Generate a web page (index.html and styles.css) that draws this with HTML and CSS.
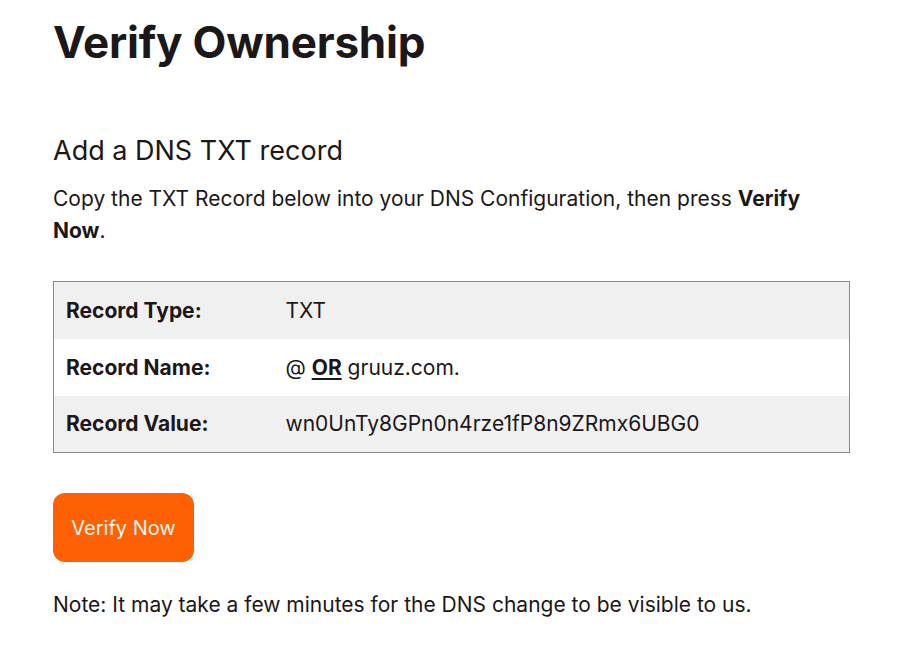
FILE: index.html
```html
<!DOCTYPE html>
<html lang="en">
<head>
<meta charset="utf-8">
<title>Verify Ownership</title>
<link rel="stylesheet" href="styles.css">
</head>
<body>
<main class="page">
  <h1 class="title">Verify Ownership</h1>
  <h2 class="subtitle">Add a DNS TXT record</h2>
  <p class="intro">Copy the TXT Record below into your DNS Configuration, then press <strong>Verify Now</strong>.</p>
  <table class="records">
    <tbody>
      <tr class="row shaded">
        <th class="label">Record Type:</th>
        <td class="value">TXT</td>
      </tr>
      <tr class="row">
        <th class="label">Record Name:</th>
        <td class="value">@ <strong class="or">OR</strong> gruuz.com.</td>
      </tr>
      <tr class="row shaded">
        <th class="label">Record Value:</th>
        <td class="value">wn0UnTy8GPn0n4rze1fP8n9ZRmx6UBG0</td>
      </tr>
    </tbody>
  </table>
  <button class="verify-btn" type="button">Verify Now</button>
  <p class="note">Note: It may take a few minutes for the DNS change to be visible to us.</p>
</main>
</body>
</html>
```

FILE: styles.css
```css
* {
  box-sizing: border-box;
}

html, body {
  margin: 0;
  padding: 0;
  background: #ffffff;
}

body {
  font-family: Inter, "Noto Sans", "Liberation Sans", sans-serif;
  color: #1c1718;
}

.page {
  width: 797px;
  margin-left: 53px;
  padding-top: 15px;
  display: flex;
  flex-direction: column;
  align-items: flex-start;
}

.title {
  margin: 0;
  font-size: 44px;
  line-height: 54px;
  font-weight: 700;
  letter-spacing: -0.2px;
}

.subtitle {
  margin: 64px 0 0;
  font-size: 27px;
  line-height: 36px;
  font-weight: 400;
}

.intro {
  margin: 14px 0 0;
  font-size: 21px;
  line-height: 32px;
}

.intro strong {
  font-weight: 700;
}

.records {
  width: 797px;
  margin-top: 34px;
  border-collapse: collapse;
  border: 1px solid #8a8a8a;
  font-size: 21px;
}

.row {
  height: 57px;
  background: #ffffff;
}

.row.shaded {
  background: #f0f0f0;
}

.label {
  width: 232px;
  padding: 0 0 0 12px;
  text-align: left;
  font-weight: 700;
  vertical-align: middle;
}

.value {
  padding: 0;
  font-weight: 400;
  vertical-align: middle;
}

.or {
  font-weight: 700;
  text-decoration: underline;
  text-underline-offset: 3px;
}

.verify-btn {
  margin-top: 40px;
  width: 141px;
  height: 69px;
  border: none;
  border-radius: 12px;
  background: #fd6103;
  color: #fff7ef;
  font-family: inherit;
  font-size: 20px;
  font-weight: 400;
  padding: 0;
  cursor: pointer;
}

.note {
  margin: 27px 0 0;
  font-size: 21px;
  line-height: 32px;
}
```
